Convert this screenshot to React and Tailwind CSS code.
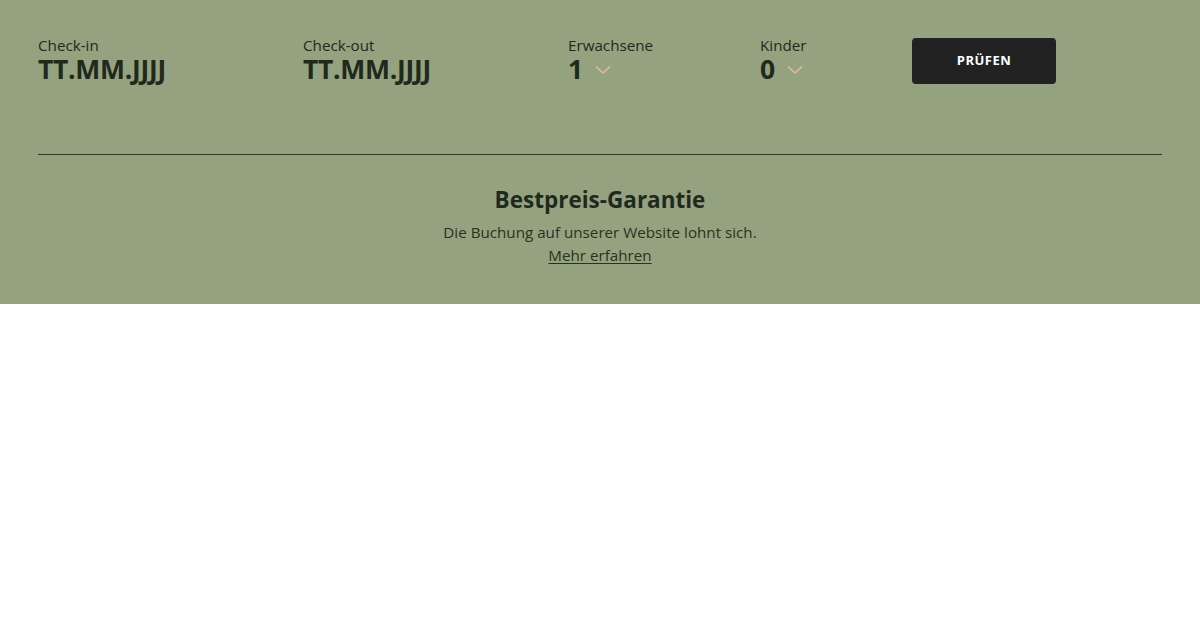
import React from "react";

const Chevron = () => (
  <svg width="16" height="10" viewBox="0 0 16 10" className="ml-[12px] mt-[1px]" fill="none">
    <path d="M1.5 2 L8 8 L14.5 2" stroke="#e9b795" strokeWidth="1.7" strokeLinecap="round" strokeLinejoin="round" />
  </svg>
);

function Field({ label, value, width, chevron }) {
  return (
    <div className={`flex flex-col ${width}`}>
      <span className="text-[15.2px] leading-[20px] text-[#1f2a1c]">{label}</span>
      <div className="flex items-center h-[28px]">
        <span className="text-[26.5px] leading-[28px] font-bold text-[#1f2a1c] tracking-[-0.3px]">{value}</span>
        {chevron && <Chevron />}
      </div>
    </div>
  );
}

export default function App() {
  return (
    <div className="w-[1200px] h-[630px] bg-white" style={{ fontFamily: '"Open Sans", sans-serif' }}>
      <div className="bg-[#94a27f] h-[304px] px-[38px] pt-[35px]">
        <div className="flex items-start">
          <Field label="Check-in" value="TT.MM.JJJJ" width="w-[265px]" />
          <Field label="Check-out" value="TT.MM.JJJJ" width="w-[265px]" />
          <Field label="Erwachsene" value="1" width="w-[192px]" chevron />
          <Field label="Kinder" value="0" width="w-[152px]" chevron />
          <button className="mt-[3px] w-[144px] h-[46px] rounded-[4px] bg-[#222222] text-white text-[13px] font-bold tracking-[0.5px]">
            PRÜFEN
          </button>
        </div>
        <div className="mt-[70px] h-px bg-[#2d3a28]" />
        <div className="flex flex-col items-center pt-[30px]">
          <h2 className="text-[22.5px] leading-[30px] font-bold text-[#1f2a1c]">Bestpreis-Garantie</h2>
          <p className="mt-[6px] text-[15.2px] leading-[23px] text-[#27331f]">Die Buchung auf unserer Website lohnt sich.</p>
          <a className="text-[15.2px] leading-[23px] text-[#27331f] underline underline-offset-2">Mehr erfahren</a>
        </div>
      </div>
    </div>
  );
}
